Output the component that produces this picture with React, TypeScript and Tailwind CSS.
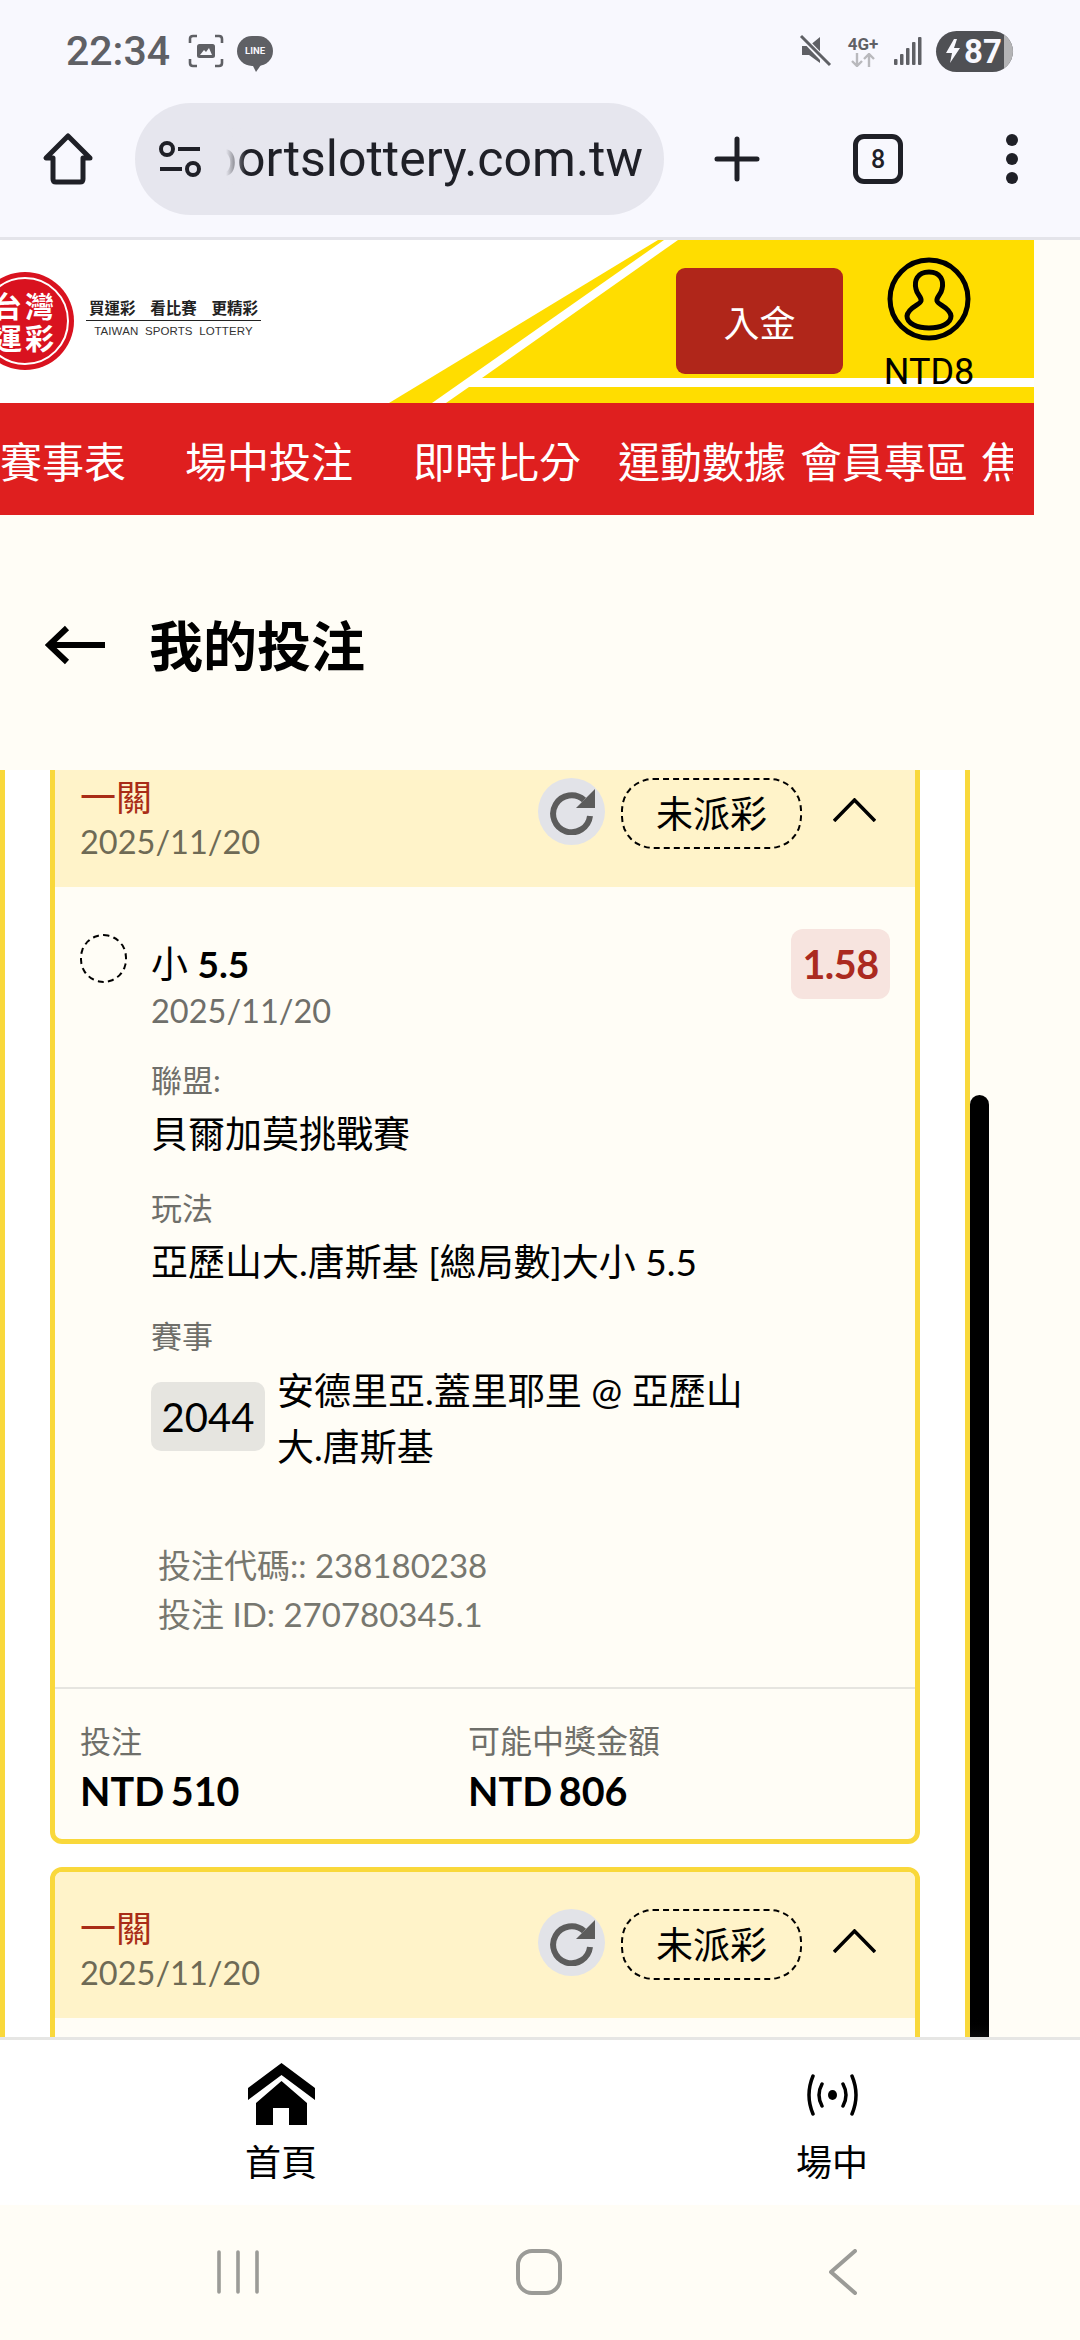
import type { ReactNode } from 'react'

const latoCjk = "font-['Lato','Noto_Sans_CJK_TC',sans-serif]"

function StatusBar() {
    return (
        <div className="flex h-[100px] items-center pt-[2px] pl-[66px] pr-[67px] text-[#5f6065]">
            <span className="font-['Roboto',sans-serif] text-[41px] leading-none font-medium">22:34</span>
            <svg width="36" height="34" viewBox="0 0 36 34" className="ml-[18px]" fill="none" stroke="#5f6065" strokeWidth="2.6">
                <path d="M2 9V5Q2 2 5 2H9M27 2H31Q34 2 34 5V9M2 25V29Q2 32 5 32H9M27 32H31Q34 32 34 29V25" />
                <rect x="9" y="10" width="18" height="14" rx="2.5" fill="#5f6065" stroke="none" />
                <path d="M12 21L16 16L18 18L21 14L24 21Z" fill="#f8f8fe" stroke="none" />
            </svg>
            <div className="relative ml-[13px] flex h-[30px] w-[36px] items-center justify-center rounded-full bg-[#5f6065]">
                <span className="font-['Roboto',sans-serif] text-[9.5px] leading-none font-bold text-[#f8f8fe]">LINE</span>
                <svg width="12" height="10" viewBox="0 0 12 10" className="absolute -bottom-[6px] left-[14px]">
                    <path d="M0 0H12L5 10Z" fill="#5f6065" />
                </svg>
            </div>
            <div className="flex-1" />
            <svg width="34" height="34" viewBox="0 0 34 34">
                <path d="M3 12H10L21 3V29L10 21H3Z" fill="#5f6065" />
                <path d="M3 3L31 32" stroke="#f8f8fe" strokeWidth="6" />
                <path d="M2 2L31 31" stroke="#5f6065" strokeWidth="3" />
            </svg>
            <div className="ml-[11px] flex w-[38px] flex-col items-center">
                <span className="font-['Roboto',sans-serif] text-[17px] leading-[17px] font-bold whitespace-nowrap">4G+</span>
                <svg width="26" height="14" viewBox="0 0 26 14" fill="none" stroke="#b9b9bd" strokeWidth="2.4">
                    <path d="M7 0V12M2 8L7 13L12 8M19 14V2M14 6L19 1L24 6" />
                </svg>
            </div>
            <svg width="28" height="30" viewBox="0 0 28 30" className="ml-[12px]" fill="#5f6065">
                <rect x="0" y="23" width="3.5" height="6" rx="1" />
                <rect x="6" y="18" width="3.5" height="11" rx="1" />
                <rect x="12" y="12" width="3.5" height="17" rx="1" />
                <rect x="18" y="6" width="3.5" height="23" rx="1" />
                <rect x="24" y="1" width="3.5" height="28" rx="1" />
            </svg>
            <div className="ml-[14px] flex h-[41px] w-[77px] items-center overflow-hidden rounded-full bg-[#4f5054]">
                <svg width="16" height="24" viewBox="0 0 16 24" className="ml-[9px]">
                    <path d="M9 0L1 14H7L5 24L15 9H9L12 0Z" fill="#f8f8fe" />
                </svg>
                <span className="ml-[3px] w-[40px] font-['Roboto',sans-serif] text-[33px] leading-none font-bold text-[#f8f8fe]">87</span>
                <div className="h-full flex-1 bg-[#b4b4b6]" />
            </div>
        </div>
    )
}

function Toolbar() {
    return (
        <div className="flex h-[140px] items-center pb-[19px] border-b-[3px] border-[#e4e4ea]">
            <svg width="52" height="54" viewBox="0 0 52 54" className="ml-[42px]" fill="none" stroke="#1f2027" strokeWidth="5" strokeLinejoin="round">
                <path d="M26 4L4 26H11V47Q11 50 14 50H38Q41 50 41 47V26H48Z" />
            </svg>
            <div className="relative ml-[41px] flex h-[112px] w-[529px] items-center rounded-full bg-[#e6e6ee]">
                <svg width="44" height="36" viewBox="0 0 44 36" className="ml-[23px]" fill="none" stroke="#1f2027" strokeWidth="4">
                    <circle cx="9" cy="8" r="6" />
                    <path d="M20 8H42M2 28H24" />
                    <circle cx="35" cy="28" r="6" />
                </svg>
                <div className="relative ml-[24px] flex w-[417px] justify-end overflow-hidden">
                    <span className="font-['Roboto',sans-serif] text-[50px] leading-[70px] whitespace-nowrap text-[#1f2027]">sportslottery.com.tw</span>
                    <div className="absolute inset-y-0 left-0 w-[20px] bg-gradient-to-r from-[#e6e6ee] to-transparent" />
                </div>
            </div>
            <svg width="46" height="46" viewBox="0 0 46 46" className="ml-[50px]" stroke="#1f2027" strokeWidth="5" strokeLinecap="round">
                <path d="M23 3V43M3 23H43" />
            </svg>
            <div className="ml-[93px] flex h-[50px] w-[50px] items-center justify-center rounded-[11px] border-[5px] border-[#1f2027]">
                <span className="font-['Roboto',sans-serif] text-[25px] leading-none font-medium text-[#1f2027]">8</span>
            </div>
            <div className="ml-[103px] flex flex-col gap-[7px]">
                <div className="h-[12px] w-[12px] rounded-full bg-[#1f2027]" />
                <div className="h-[12px] w-[12px] rounded-full bg-[#1f2027]" />
                <div className="h-[12px] w-[12px] rounded-full bg-[#1f2027]" />
            </div>
        </div>
    )
}

function SiteHeader() {
    return (
        <div className="relative flex h-[163px] w-[1034px] items-start overflow-hidden bg-white">
            <svg width="1034" height="163" viewBox="0 0 1034 163" className="absolute inset-0">
                <path d="M389 163L658 0H664L432 163Z" fill="#ffdd00" />
                <path d="M482 138L678 0H1034V138Z" fill="#ffdd00" />
                <path d="M446 163L469 147H1034V163Z" fill="#ffdd00" />
            </svg>
            <div className="relative -ml-[24px] mt-[32px] flex h-[98px] w-[98px] items-center justify-center rounded-full bg-[#d9121f]">
                <div className="flex h-[88px] w-[88px] items-center justify-center rounded-full border-[2px] border-white">
                    <div className="grid grid-cols-[32px_32px] font-['Noto_Sans_CJK_TC',sans-serif] text-[29px] leading-[32px] font-bold text-white">
                        <span>台</span>
                        <span>灣</span>
                        <span>運</span>
                        <span>彩</span>
                    </div>
                </div>
            </div>
            <div className="relative ml-[12px] mt-[56px] flex w-[175px] flex-col items-center">
                <div className="flex w-[169px] justify-between font-['Noto_Sans_CJK_TC',sans-serif] text-[15.5px] leading-[22px] font-bold text-[#222]">
                    <span>買運彩</span>
                    <span>看比賽</span>
                    <span>更精彩</span>
                </div>
                <div className="mt-[2px] h-[1px] w-full bg-[#222]" />
                <span className="mt-[3px] font-['Liberation_Sans',sans-serif] text-[11.5px] leading-[15px] font-medium tracking-[0.1px] whitespace-pre text-[#333]">TAIWAN  SPORTS  LOTTERY</span>
            </div>
            <button className="relative ml-[415px] mt-[28px] flex h-[106px] w-[167px] items-center justify-center rounded-[9px] bg-[#b0261a] font-['Noto_Sans_CJK_TC',sans-serif] text-[36px] text-white">
                入金
            </button>
            <div className="relative ml-[41px] mt-[17px] flex w-[90px] flex-col items-center">
                <svg width="84" height="84" viewBox="0 0 84 84" fill="none" stroke="#000" strokeWidth="5">
                    <circle cx="42" cy="42" r="39" />
                    <path d="M42 15C30 15 27 24 29 32C30 38 35 40 34 44C33 48 21 50 20 59C20 67 31 71 42 71C53 71 64 67 64 59C63 50 51 48 50 44C49 40 54 38 55 32C57 24 54 15 42 15Z" />
                </svg>
                <span className="mt-[13px] font-['Roboto',sans-serif] text-[36px] leading-[36px] text-black">NTD8</span>
            </div>
        </div>
    )
}

function RedNav() {
    return (
        <nav className="flex h-[112px] w-[1034px] items-center bg-white">
            <div className="flex h-full w-[1013px] items-center overflow-hidden bg-[#df1f1f] font-['Noto_Sans_CJK_TC',sans-serif] text-[42px] whitespace-nowrap text-white">
                <span>賽事表</span>
                <span className="ml-[59px]">場中投注</span>
                <span className="ml-[60px]">即時比分</span>
                <span className="ml-[37px]">運動數據</span>
                <span className="ml-[14px]">會員專區</span>
                <span className="ml-[13px]">焦點賽事</span>
            </div>
            <div className="h-full w-[21px] bg-[#df1f1f]" />
        </nav>
    )
}

function RefreshButton() {
    return (
        <div className="flex h-[67px] w-[67px] items-center justify-center rounded-full bg-[#e2e3e8]">
            <svg width="46" height="46" viewBox="0 0 46 46" fill="none">
                <path d="M35 11A18.5 18.5 0 1 0 41 27" stroke="#5c5c5c" strokeWidth="6" />
                <path d="M46 0V19H27Z" fill="#5c5c5c" />
            </svg>
        </div>
    )
}

function CardHeader() {
    return (
        <div className="flex h-[146px] items-start bg-[#fff3c9] pl-[25px] pr-[39px] pt-[36px]">
            <div className={`flex flex-col ${latoCjk}`}>
                <span className="text-[36px] leading-[40px] text-[#a92c16]">一關</span>
                <span className="mt-[5px] text-[32.5px] leading-[40px] text-[#6e6a55]">2025/11/20</span>
            </div>
            <div className="flex-1" />
            <div className="mt-[1px]">
                <RefreshButton />
            </div>
            <div className={`mt-[1px] ml-[16px] flex h-[71px] w-[181px] items-center justify-center rounded-[32px] border-[2.5px] border-dashed border-black text-[37px] text-black ${latoCjk}`}>
                未派彩
            </div>
            <svg width="43" height="24" viewBox="0 0 43 24" className="ml-[31px] mt-[21px]" fill="none" stroke="#000" strokeWidth="3.5">
                <path d="M1 23L21.5 2L42 23" />
            </svg>
        </div>
    )
}

function Field({ label, children }: { label: string; children: ReactNode }) {
    return (
        <div className="mt-[24px]">
            <p className="text-[31px] leading-[44px] text-[#6f6f6a]">{label}</p>
            <div className="mt-[4px] text-[37px] leading-[56px] text-black">{children}</div>
        </div>
    )
}

function CardBody() {
    return (
        <>
            <div className={`h-[800px] pl-[25px] pr-[25px] pt-[47px] ${latoCjk}`}>
                <div className="flex items-start">
                    <div className="h-[49px] w-[47px] rounded-full border-[2px] border-dashed border-black" />
                    <div className="ml-[24px] flex-1">
                        <p className="mt-[7px] text-[37px] leading-[46px] text-black">
                            小 <span className="font-bold">5.5</span>
                        </p>
                        <p className="mt-[4px] text-[32.5px] leading-[40px] text-[#6f6f6a]">2025/11/20</p>
                    </div>
                    <div className="-mt-[5px] flex h-[70px] w-[99px] items-center justify-center rounded-[12px] bg-[#f7e4df] text-[39.5px] font-bold tracking-[-0.5px] text-[#ab2a20]">
                        1.58
                    </div>
                </div>
                <div className="pl-[71px] pt-[3px]">
                    <Field label="聯盟:">貝爾加莫挑戰賽</Field>
                    <Field label="玩法">亞歷山大.唐斯基 [總局數]大小 5.5</Field>
                    <Field label="賽事">
                        <div className="mt-[24px] flex items-start">
                            <div className="flex h-[69px] w-[114px] shrink-0 items-center justify-center rounded-[10px] bg-[#e6e5e0] text-[40px]">2044</div>
                            <p className="-mt-[19px] ml-[12px] w-[490px]">安德里亞.蓋里耶里 @ 亞歷山大.唐斯基</p>
                        </div>
                    </Field>
                </div>
                <div className="mt-[66px] ml-[78px] text-[33px] leading-[49px] text-[#77776f]">
                    <p>投注代碼:: 238180238</p>
                    <p>投注 ID: 270780345.1</p>
                </div>
            </div>
            <div className={`flex h-[152px] border-t-[2px] border-[#e6e5e0] pl-[25px] pt-[30px] ${latoCjk}`}>
                <div className="w-[388px]">
                    <p className="text-[31px] leading-[44px] text-[#6f6f6a]">投注</p>
                    <p className="mt-[5px] text-[39.5px] leading-[46px] font-bold [word-spacing:-3px] text-black">NTD 510</p>
                </div>
                <div>
                    <p className="text-[32px] leading-[44px] text-[#6f6f6a]">可能中獎金額</p>
                    <p className="mt-[5px] text-[39.5px] leading-[46px] font-bold [word-spacing:-3px] text-black">NTD 806</p>
                </div>
            </div>
        </>
    )
}

function BetList() {
    return (
        <div className="relative flex h-[1267px] overflow-hidden">
            <div className="h-full w-[970px] border-x-[5px] border-[#f9d83b] bg-white px-[45px]">
                <div className="-mt-[34px] overflow-hidden rounded-[12px] border-[5px] border-[#f9d83b] bg-[#fffdf6]">
                    <CardHeader />
                    <CardBody />
                </div>
                <div className="mt-[23px] overflow-hidden rounded-[12px] border-[5px] border-[#f9d83b] bg-[#fffdf6]">
                    <CardHeader />
                    <div className="h-[200px]" />
                </div>
            </div>
            <div className="absolute left-[970px] top-[325px] h-[960px] w-[19px] rounded-t-full bg-gradient-to-b from-black from-[96%] to-[#2a2a2a]" />
        </div>
    )
}

function BottomNav() {
    return (
        <div className="flex h-[168px] items-start border-t-[3px] border-[#e6e6e4] bg-white text-black">
            <div className="ml-[231px] mt-[23px] flex w-[100px] flex-col items-center">
                <svg width="67" height="62" viewBox="0 0 67 62">
                    <path d="M33.5 0L67 25V37L33.5 12L0 37V25Z" />
                    <path d="M33.5 18L59 40V62H41V45H25V62H8V40Z" />
                </svg>
                <span className="mt-[11px] font-['Noto_Sans_CJK_TC',sans-serif] text-[36px] leading-[48px]">首頁</span>
            </div>
            <div className="ml-[451px] mt-[34px] flex w-[100px] flex-col items-center">
                <svg width="53" height="42" viewBox="0 0 53 42" fill="none" stroke="#000" strokeWidth="3.5" strokeLinecap="round">
                    <ellipse cx="26.5" cy="21" rx="4.5" ry="5" fill="#000" stroke="none" />
                    <path d="M16 10Q10 21 16 32M37 10Q43 21 37 32M7 2Q-1 21 7 40M46 2Q54 21 46 40" />
                </svg>
                <span className="mt-[20px] font-['Noto_Sans_CJK_TC',sans-serif] text-[36px] leading-[48px]">場中</span>
            </div>
        </div>
    )
}

function AndroidNav() {
    return (
        <div className="flex h-[135px] items-center bg-[#fffdf6] pb-[2px]">
            <svg width="42" height="44" viewBox="0 0 42 44" className="ml-[217px]" stroke="#9b9b97" strokeWidth="3.6" strokeLinecap="round">
                <path d="M2 2V42M21 2V42M40 2V42" />
            </svg>
            <svg width="46" height="46" viewBox="0 0 46 46" className="ml-[257px]" fill="none" stroke="#9b9b97" strokeWidth="4">
                <rect x="2" y="2" width="42" height="42" rx="14" />
            </svg>
            <svg width="28" height="46" viewBox="0 0 28 46" className="ml-[267px]" fill="none" stroke="#9b9b97" strokeWidth="4" strokeLinecap="round" strokeLinejoin="round">
                <path d="M26 2L2 23L26 44" />
            </svg>
        </div>
    )
}

export default function App() {
    return (
        <div className="flex h-[2340px] w-[1080px] flex-col overflow-hidden bg-[#fffdf6]">
            <div className="bg-[#f8f8fe]">
                <StatusBar />
                <Toolbar />
            </div>
            <SiteHeader />
            <RedNav />
            <div className={`flex h-[255px] items-center pl-[45px] pt-[4px] text-black ${latoCjk}`}>
                <svg width="60" height="40" viewBox="0 0 60 40" fill="none" stroke="#000" strokeWidth="6">
                    <path d="M60 20H4M22 3L4 20L22 37" />
                </svg>
                <h1 className="ml-[44px] mt-[3px] text-[54px] font-bold">我的投注</h1>
            </div>
            <BetList />
            <BottomNav />
            <AndroidNav />
        </div>
    )
}
